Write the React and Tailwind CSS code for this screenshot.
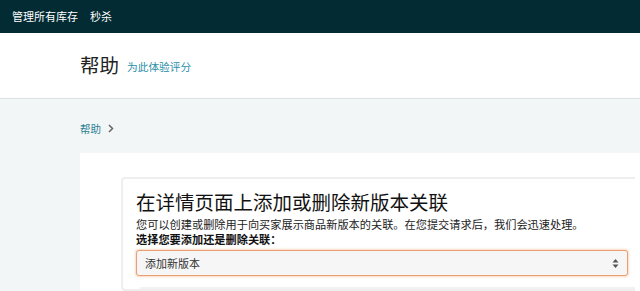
import React from 'react';

const font = { fontFamily: '"Noto Sans CJK SC", "Noto Sans", sans-serif' };

function UpDown() {
  return (
    <svg width="7" height="11" viewBox="0 0 7 11" className="text-[#555]">
      <path d="M0.5 4.5 L3.5 1 L6.5 4.5 Z" fill="currentColor" />
      <path d="M0.5 6.5 L3.5 10 L6.5 6.5 Z" fill="currentColor" />
    </svg>
  );
}

export default function App() {
  return (
    <div className="w-[640px] h-[291px] overflow-hidden bg-[#f3f6f6]" style={font}>
      {/* top nav */}
      <div className="h-[33px] bg-[#022b33] flex items-center pl-3 gap-[12px] text-white text-[11px]">
        <span>管理所有库存</span>
        <span>秒杀</span>
      </div>

      {/* page header */}
      <div className="h-[66px] bg-white border-b border-[#dce1e2] flex items-center pl-20 pb-[1px]">
        <h1 className="text-[19.5px] text-[#222] leading-none">帮助</h1>
        <a className="ml-[8px] mt-[5px] text-[10.7px] text-[#2b8fa8]">为此体验评分</a>
      </div>

      {/* breadcrumb */}
      <div className="h-[54px] flex items-center pl-20 pt-[5px] gap-[7px]">
        <span className="text-[10.5px] text-[#2a7f93]">帮助</span>
        <svg width="6" height="9" viewBox="0 0 6 9">
          <path d="M1 1 L4.5 4.5 L1 8" fill="none" stroke="#666" strokeWidth="1.5" />
        </svg>
      </div>

      {/* content panel */}
      <div className="ml-20 bg-white pl-[41px] pt-[24px] h-[200px]">
        <div className="w-[514px] border-2 border-r-0 border-[#eeeeee] rounded-l-[4px] pl-[13px] pt-[11px]">
          <h2 className="text-[19.5px] leading-[24px] text-[#111]">在详情页面上添加或删除新版本关联</h2>
          <p className="text-[11.2px] leading-[16px] text-[#222] mt-[2px]">
            您可以创建或删除用于向买家展示商品新版本的关联。在您提交请求后，我们会迅速处理。
          </p>
          <p className="text-[11.2px] leading-[14px] font-bold text-[#111]">选择您要添加还是删除关联：</p>
          <div className="mt-[4px] w-[492px] h-[26px] rounded-[3px] border border-[#e8a070] shadow-[0_0_2px_1px_rgba(240,150,90,0.35)] bg-[#f6f6f6] flex items-center justify-between pl-[8px] pr-[8px]">
            <span className="text-[11px] text-[#333]">添加新版本</span>
            <UpDown />
          </div>
          <div className="mt-[11px] ml-[4px] h-[2px] bg-[#f2f2f2]" />
        </div>
      </div>
    </div>
  );
}
